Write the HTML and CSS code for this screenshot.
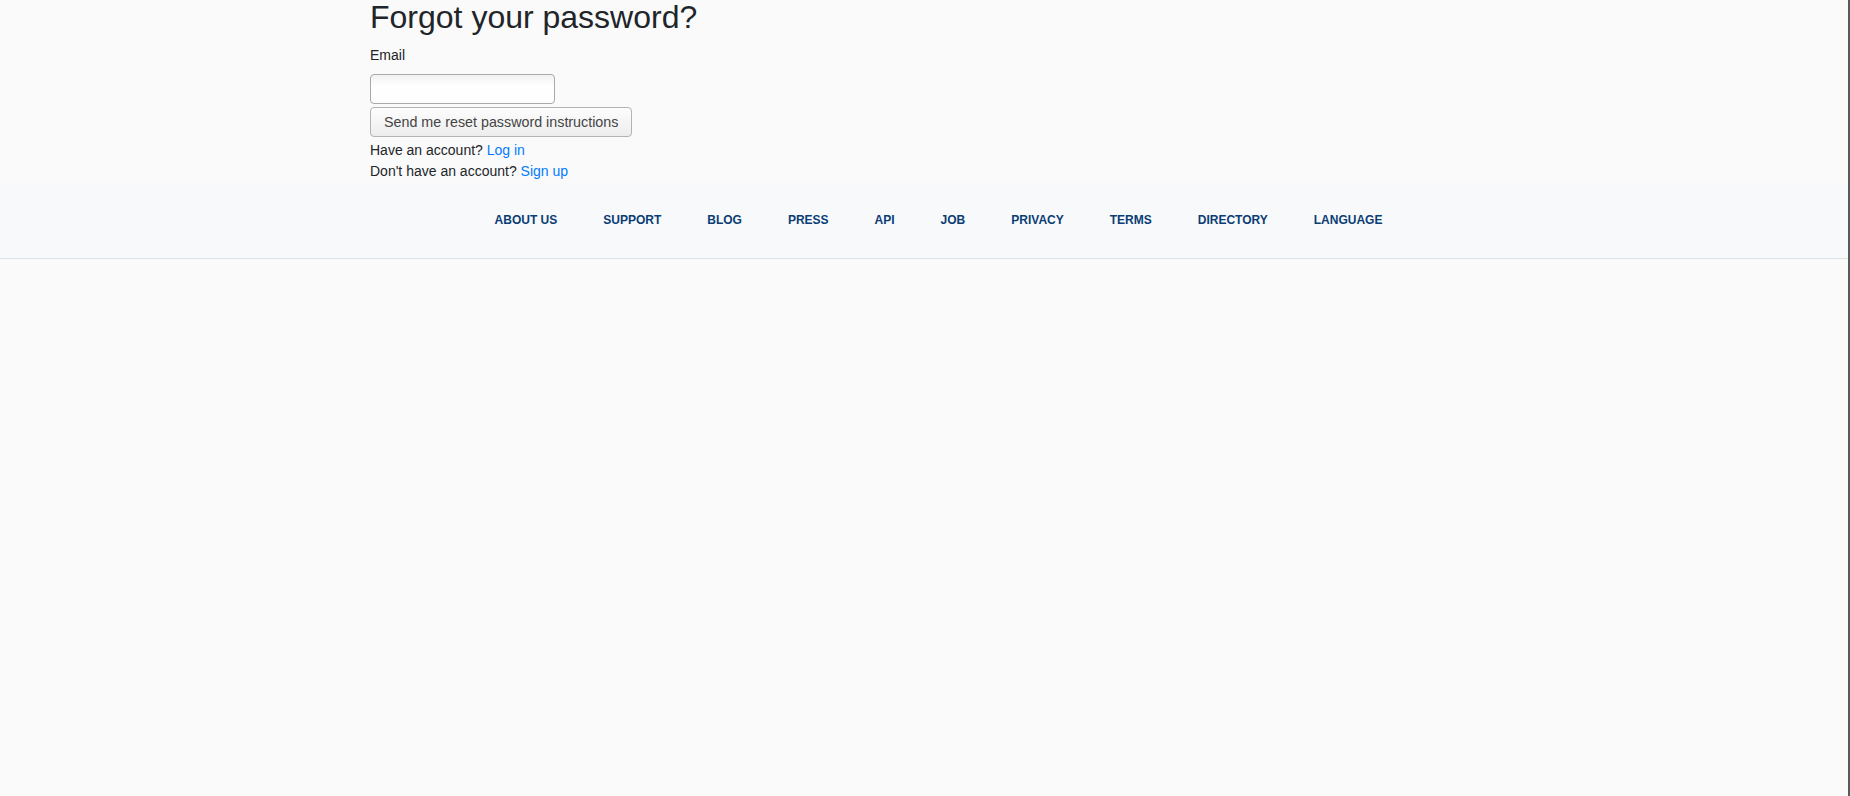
FILE: index.html
```html
<!DOCTYPE html>
<html lang="en">
<head>
<meta charset="utf-8">
<title>Forgot your password?</title>
<link rel="stylesheet" href="styles.css">
</head>
<body>
<main class="container">
  <h2 class="title">Forgot your password?</h2>
  <form class="reset-form">
    <label class="field-label" for="email">Email</label>
    <input class="field-input" id="email" type="email">
    <button class="btn-submit" type="button">Send me reset password instructions</button>
  </form>
  <div class="links">
    <div class="links-row">Have an account? <a href="#">Log in</a></div>
    <div class="links-row">Don't have an account? <a href="#">Sign up</a></div>
  </div>
</main>
<footer class="footer">
  <ul class="footer-nav">
    <li><a href="#">About us</a></li>
    <li><a href="#">Support</a></li>
    <li><a href="#">Blog</a></li>
    <li><a href="#">Press</a></li>
    <li><a href="#">API</a></li>
    <li><a href="#">Job</a></li>
    <li><a href="#">Privacy</a></li>
    <li><a href="#">Terms</a></li>
    <li><a href="#">Directory</a></li>
    <li><a href="#">Language</a></li>
  </ul>
</footer>
</body>
</html>
```

FILE: styles.css
```css
html {
  background: #fafafa;
}
body {
  box-sizing: border-box;
  min-height: 796px;
  margin: 0;
  border-right: 2px solid #5a5a5a;
  font-family: "Liberation Sans", Arial, sans-serif;
  font-size: 14px;
  line-height: 1.5;
  color: #212529;
}
a {
  color: #007bff;
  text-decoration: none;
}
.container {
  width: 1110px;
  margin: 0 auto;
  padding-left: 2px;
}
.title {
  margin: 0 0 10px;
  font-size: 32px;
  font-weight: 400;
  line-height: 35px;
}
.reset-form {
  display: flex;
  flex-direction: column;
  align-items: flex-start;
}
.field-label {
  display: block;
  margin-bottom: 8px;
}
.field-input {
  box-sizing: border-box;
  width: 185px;
  height: 30px;
  margin: 0 0 3px;
  border: 1px solid #a9a9a9;
  border-radius: 4px;
  background: linear-gradient(#f1f1f1, #fff 40%, #fdfdfd);
  font: inherit;
}
.btn-submit {
  box-sizing: border-box;
  height: 30px;
  padding: 0 13px;
  border: 1px solid #b3b3b3;
  border-radius: 4px;
  background: linear-gradient(#fdfdfd, #ededed);
  color: #444;
  font-family: "Liberation Sans", Arial, sans-serif;
  font-size: 14.3px;
}
.links {
  margin-top: 3px;
}
.footer {
  background: #f8f9fa;
  border-bottom: 1px solid #dee2e6;
  padding: 29px 0;
}
.footer-nav {
  display: flex;
  justify-content: center;
  gap: 46px;
  margin: 0;
  padding: 0 0 0 29px;
  list-style: none;
}
.footer-nav a {
  display: block;
  color: #0a3d74;
  font-size: 12px;
  font-weight: 700;
  line-height: 18px;
  text-transform: uppercase;
}
```
